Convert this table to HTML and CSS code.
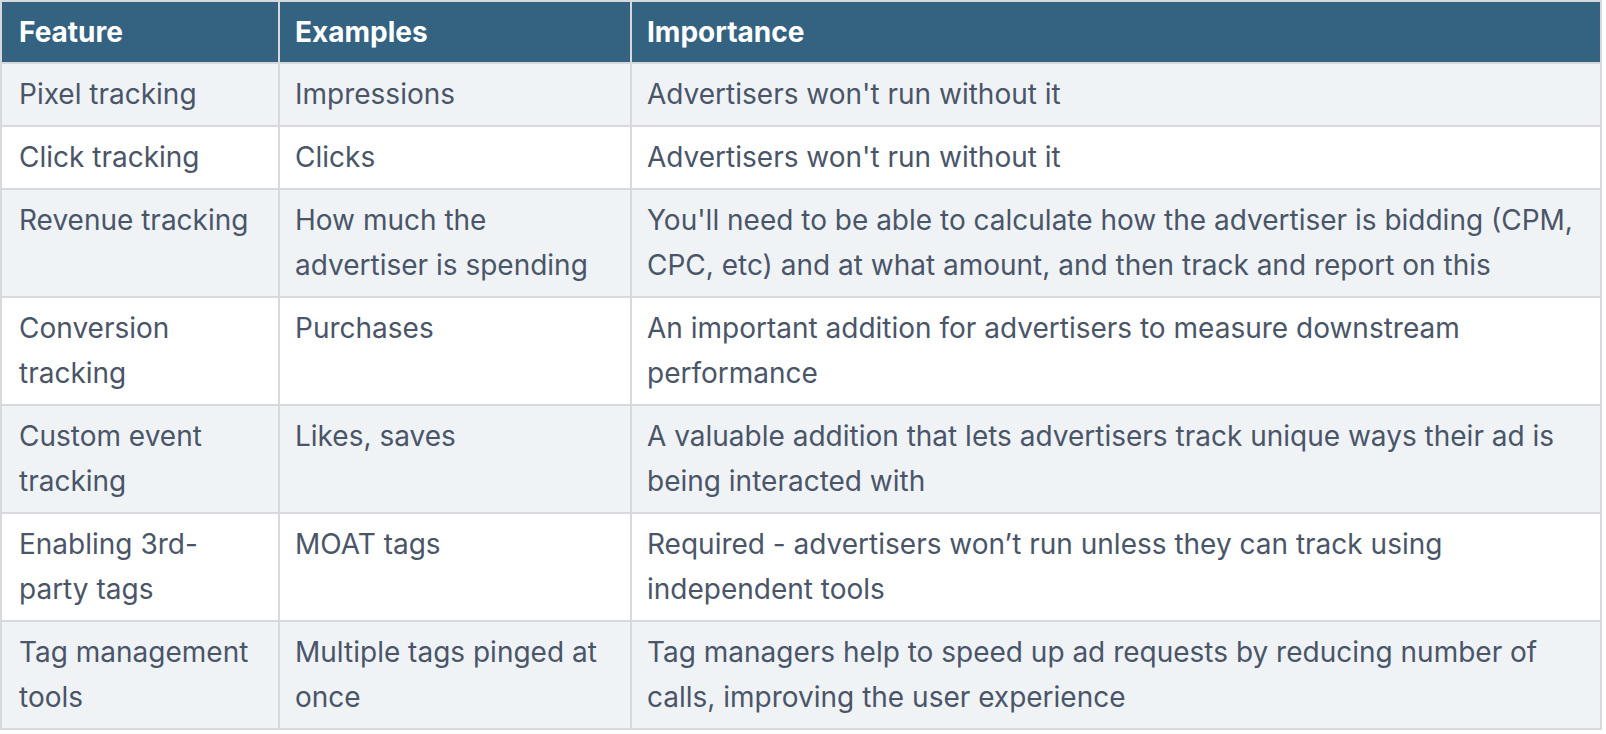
FILE: index.html
```html
<!DOCTYPE html>
<html lang="en">
<head>
<meta charset="utf-8">
<title>Ad tracking features</title>
<link rel="stylesheet" href="styles.css">
</head>
<body>
<table class="features">
  <colgroup>
    <col class="c1">
    <col class="c2">
    <col class="c3">
  </colgroup>
  <thead>
    <tr><th>Feature</th><th>Examples</th><th>Importance</th></tr>
  </thead>
  <tbody>
    <tr><td>Pixel tracking</td><td>Impressions</td><td>Advertisers won't run without it</td></tr>
    <tr><td>Click tracking</td><td>Clicks</td><td>Advertisers won't run without it</td></tr>
    <tr><td>Revenue tracking</td><td>How much the advertiser is spending</td><td>You'll need to be able to calculate how the advertiser is bidding (CPM, CPC, etc) and at what amount, and then track and report on this</td></tr>
    <tr><td>Conversion tracking</td><td>Purchases</td><td>An important addition for advertisers to measure downstream performance</td></tr>
    <tr><td>Custom event tracking</td><td>Likes, saves</td><td>A valuable addition that lets advertisers track unique ways their ad is being interacted with</td></tr>
    <tr><td>Enabling 3rd-party tags</td><td>MOAT tags</td><td>Required - advertisers won’t run unless they can track using independent tools</td></tr>
    <tr><td>Tag management tools</td><td>Multiple tags pinged at once</td><td>Tag managers help to speed up ad requests by reducing number of calls, improving the user experience</td></tr>
  </tbody>
</table>
</body>
</html>
```
FILE: styles.css
```css
html, body {
  margin: 0;
  padding: 0;
  background: #ffffff;
}

.features {
  width: 1602px;
  table-layout: fixed;
  border-collapse: collapse;
  font-family: Inter, "Liberation Sans", sans-serif;
  font-size: 28px;
  line-height: 45px;
  color: #4a5568;
}

.c1 { width: 278px; }
.c2 { width: 352px; }
.c3 { width: auto; }

.features th,
.features td {
  border: 2px solid #d8d9de;
  padding: 8px 15px 8px 15px;
  text-align: left;
  vertical-align: top;
}

.features th:first-child,
.features td:first-child {
  padding-left: 17px;
}

.features th {
  padding-top: 7.5px;
  padding-bottom: 7.5px;
  background: #346382;
  color: #ffffff;
  font-weight: 700;
}

.features tbody tr:nth-child(odd) td {
  background: #eff3f6;
}

.features tbody tr:nth-child(even) td {
  background: #ffffff;
}
```
